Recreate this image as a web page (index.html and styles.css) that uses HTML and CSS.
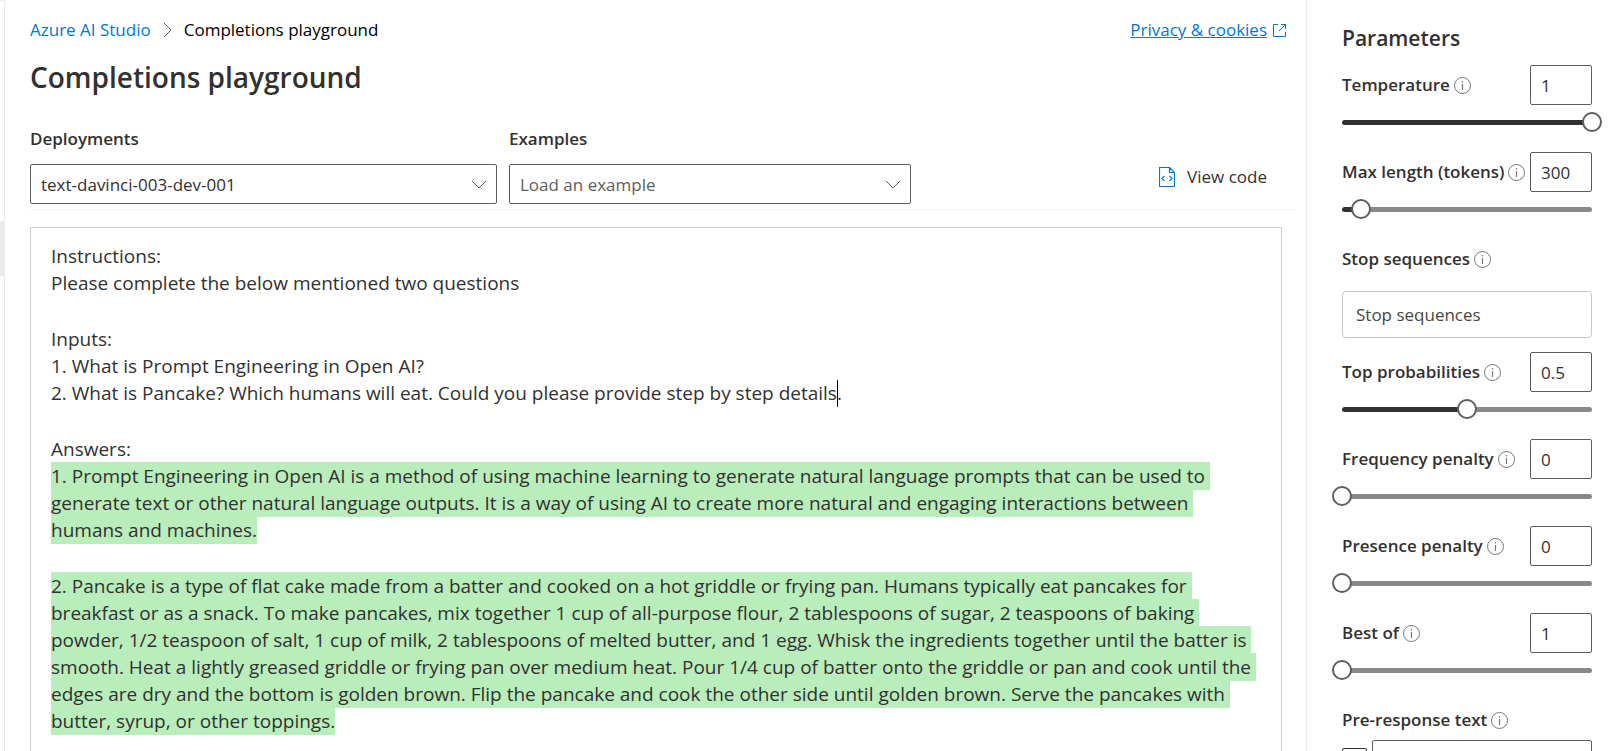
FILE: index.html
```html
<!DOCTYPE html>
<html lang="en">
<head>
<meta charset="utf-8">
<meta name="viewport" content="width=device-width, initial-scale=1">
<title>Completions playground - Azure AI Studio</title>
<link rel="stylesheet" href="styles.css">
</head>
<body>
<svg class="sprite" aria-hidden="true">
  <symbol id="info" viewBox="0 0 17 17">
    <circle cx="8.500" cy="8.500" r="8" fill="none" stroke="currentColor"/>
    <path d="M8.500 7v6M8.500 4v1.500" fill="none" stroke="currentColor" stroke-width="1.200"/>
  </symbol>
  <symbol id="chevron" viewBox="0 0 16 9">
    <path d="M1 1l7 7 7-7" fill="none" stroke="currentColor"/>
  </symbol>
</svg>
<div class="app">
  <nav class="rail" aria-label="Navigation"><span class="rail-current"></span></nav>

  <main class="main">
    <header class="top">
      <nav class="crumbs" aria-label="Breadcrumb">
        <a href="#">Azure AI Studio</a>
        <svg class="crumb-sep" viewBox="0 0 9 16" aria-hidden="true"><path d="M1 1l7 7-7 7" fill="none" stroke="currentColor"/></svg>
        <span>Completions playground</span>
      </nav>
      <a class="privacy" href="#"><span>Privacy &amp; cookies</span>
        <svg viewBox="0 0 13 13" aria-hidden="true"><path d="M5 .5H.5v12h12V8M8 .5h4.500V5M12.500.5L6 7" fill="none" stroke="currentColor"/></svg>
      </a>
    </header>
    <h1>Completions playground</h1>

    <div class="toolbar">
      <div class="field field-deploy">
        <label for="deployments">Deployments</label>
        <div class="select">
          <select id="deployments"><option>text-davinci-003-dev-001</option></select>
          <svg aria-hidden="true"><use href="#chevron"/></svg>
        </div>
      </div>
      <div class="field field-example">
        <label for="examples">Examples</label>
        <div class="select muted">
          <select id="examples"><option>Load an example</option></select>
          <svg aria-hidden="true"><use href="#chevron"/></svg>
        </div>
      </div>
      <button class="view-code" type="button">
        <svg viewBox="0 0 16 20" aria-hidden="true"><path d="M.5.5h10l5 5v14H.5zM10.500.5v5h5M5.500 9L3 11.500 5.500 14M10.500 9l2.500 2.500-2.500 2.500" fill="none" stroke="currentColor" stroke-width="1.200"/></svg>
        View code
      </button>
    </div>

    <div class="editor" contenteditable="true" role="textbox" aria-multiline="true" aria-label="Prompt" spellcheck="false">
      <p>Instructions:
Please complete the below mentioned two questions</p>
      <p>Inputs:
1. What is Prompt Engineering in Open AI?
2. What is Pancake? Which humans will eat. Could you please provide step by step details<span class="caret"></span>.</p>
      <p>Answers:
<mark>1. Prompt Engineering in Open AI is a method of using machine learning to generate natural language prompts that can be used to 
generate text or other natural language outputs. It is a way of using AI to create more natural and engaging interactions between 
humans and machines.</mark></p>
      <p><mark>2. Pancake is a type of flat cake made from a batter and cooked on a hot griddle or frying pan. Humans typically eat pancakes for 
breakfast or as a snack. To make pancakes, mix together 1 cup of all-purpose flour, 2 tablespoons of sugar, 2 teaspoons of baking 
powder, 1/2 teaspoon of salt, 1 cup of milk, 2 tablespoons of melted butter, and 1 egg. Whisk the ingredients together until the batter is 
smooth. Heat a lightly greased griddle or frying pan over medium heat. Pour 1/4 cup of batter onto the griddle or pan and cook until the 
edges are dry and the bottom is golden brown. Flip the pancake and cook the other side until golden brown. Serve the pancakes with 
butter, syrup, or other toppings.</mark></p>
    </div>
  </main>

  <aside class="params">
    <h2>Parameters</h2>
    <div class="param">
      <div class="row"><label for="temp">Temperature</label><svg class="info" aria-hidden="true"><use href="#info"/></svg><input class="num" id="temp" type="text" value="1"></div>
      <div class="slider"><span class="track" style="--fill: 100%"></span><input type="range" aria-label="Temperature" min="0" max="1" step="0.01" value="1"></div>
    </div>
    <div class="param">
      <div class="row"><label for="maxlen">Max length (tokens)</label><svg class="info" aria-hidden="true"><use href="#info"/></svg><input class="num" id="maxlen" type="text" value="300"></div>
      <div class="slider"><span class="track" style="--fill: 7.5%"></span><input type="range" aria-label="Max length" min="0" max="4000" value="300"></div>
    </div>
    <div class="param stop">
      <div class="row"><label for="stop">Stop sequences</label><svg class="info" aria-hidden="true"><use href="#info"/></svg></div>
      <input class="text" id="stop" type="text" placeholder="Stop sequences">
    </div>
    <div class="param">
      <div class="row"><label for="topp">Top probabilities</label><svg class="info" aria-hidden="true"><use href="#info"/></svg><input class="num" id="topp" type="text" value="0.5"></div>
      <div class="slider"><span class="track" style="--fill: 50%"></span><input type="range" aria-label="Top probabilities" min="0" max="1" step="0.01" value="0.5"></div>
    </div>
    <div class="param">
      <div class="row"><label for="freq">Frequency penalty</label><svg class="info" aria-hidden="true"><use href="#info"/></svg><input class="num" id="freq" type="text" value="0"></div>
      <div class="slider"><span class="track" style="--fill: 0%"></span><input type="range" aria-label="Frequency penalty" min="0" max="2" step="0.01" value="0"></div>
    </div>
    <div class="param">
      <div class="row"><label for="pres">Presence penalty</label><svg class="info" aria-hidden="true"><use href="#info"/></svg><input class="num" id="pres" type="text" value="0"></div>
      <div class="slider"><span class="track" style="--fill: 0%"></span><input type="range" aria-label="Presence penalty" min="0" max="2" step="0.01" value="0"></div>
    </div>
    <div class="param">
      <div class="row"><label for="best">Best of</label><svg class="info" aria-hidden="true"><use href="#info"/></svg><input class="num" id="best" type="text" value="1"></div>
      <div class="slider"><span class="track" style="--fill: 0%"></span><input type="range" aria-label="Best of" min="1" max="20" value="1"></div>
    </div>
    <div class="param">
      <div class="row"><label for="pre">Pre-response text</label><svg class="info" aria-hidden="true"><use href="#info"/></svg></div>
      <div class="check-row"><input type="checkbox" aria-label="Use pre-response text"><input class="num wide" id="pre" type="text"></div>
    </div>
  </aside>
</div>
</body>
</html>
```
FILE: styles.css
```css
* { box-sizing: border-box; }

body {
  margin: 0;
  font: 17px/24px "Segoe UI", "Open Sans", "Noto Sans", sans-serif;
  color: #323130;
  background: #fff;
}

h1, h2, p { margin: 0; }
label { font-weight: 600; white-space: nowrap; }
input, select, button { font: inherit; color: inherit; }
.sprite { display: none; }

.app { display: flex; height: 100vh; overflow: hidden; }

.rail {
  flex: none;
  width: 5px;
  padding-top: 220px;
  border-top: 1px solid #edebe9;
  border-right: 1px solid #edebe9;
}
.rail-current { display: block; height: 55px; background: #edebe9; }

.main {
  flex: 1;
  min-width: 0;
  display: flex;
  flex-direction: column;
  padding: 18px 11px 0 25px;
}

.top { display: flex; justify-content: space-between; padding-right: 9px; }
.crumbs { display: flex; align-items: center; gap: 12px; color: #000; }
.crumbs a, .privacy { color: #0078d4; text-decoration: none; }
.crumb-sep { width: 9px; height: 16px; color: #605e5c; }
.privacy { display: flex; align-items: center; gap: 6px; }
.privacy span { text-decoration: underline; }
.privacy svg { width: 13px; height: 13px; }

h1 { font-size: 28px; line-height: 36px; font-weight: 600; margin-top: 17px; }

.toolbar {
  display: flex;
  gap: 12px;
  margin-top: 32px;
  padding-bottom: 5px;
  border-bottom: 1px solid #f3f2f1;
}
.field { display: flex; flex-direction: column; gap: 13px; }
.field-deploy { flex: 0 1 467px; }
.field-example { flex: 0 1 402px; }

.select { display: grid; align-items: center; }
.select > * { grid-area: 1 / 1; }
.select select {
  appearance: none;
  width: 100%;
  height: 40px;
  padding: 1px 36px 0 10px;
  border: 1px solid #605e5c;
  border-radius: 2px;
  background: #fff;
}
.select svg {
  justify-self: end;
  width: 16px;
  height: 9px;
  margin-right: 10px;
  color: #605e5c;
  pointer-events: none;
}
.muted select { color: #605e5c; }

.view-code {
  display: flex;
  align-items: center;
  align-self: end;
  gap: 12px;
  height: 40px;
  margin: 0 28px 7px auto;
  padding: 0;
  border: 0;
  background: none;
}
.view-code svg { width: 16px; height: 20px; color: #0078d4; }

.editor {
  flex: 1 0 auto;
  display: flex;
  flex-direction: column;
  gap: 29px;
  margin: 17px 13px 0 0;
  padding: 15px 10px 40px 20px;
  border: 1px solid #d2d0ce;
  font-size: 19px;
  line-height: 27px;
  outline: 0;
}
.editor p { white-space: pre-wrap; }
mark {
  padding: 1px 0;
  color: inherit;
  background: #b9edbb;
}
.caret {
  display: inline-block;
  height: 27px;
  margin-right: -1px;
  border-left: 1px solid #000;
  vertical-align: bottom;
}

.params {
  flex: none;
  width: 307px;
  padding: 23px 21px 0 35px;
  border-left: 1px solid #edebe9;
}
h2 { font-size: 21px; line-height: 30px; font-weight: 600; margin-bottom: 12px; }
.param { margin-bottom: 20px; }
.stop { margin-bottom: 14px; }
.row { display: flex; align-items: center; gap: 4px; height: 40px; }
.info { flex: none; width: 17px; height: 17px; color: #797775; }
.num {
  flex: none;
  width: 62px;
  height: 40px;
  margin-left: auto;
  padding: 0 10px;
  border: 1px solid #605e5c;
  border-radius: 2px;
}
.text {
  width: 100%;
  height: 47px;
  margin-top: 12px;
  padding: 0 13px;
  border: 1px solid #c8c6c4;
  border-radius: 4px;
}
.text::placeholder { color: #484644; }

.slider { display: grid; align-items: center; margin-top: 7px; }
.slider > * { grid-area: 1 / 1; }
.track {
  height: 5px;
  border-radius: 3px;
  background: linear-gradient(to right, #323130 var(--fill), #8a8886 var(--fill));
}
.slider input {
  appearance: none;
  width: calc(100% + 20px);
  height: 20px;
  margin: 0 -10px;
  background: none;
}
.slider input::-webkit-slider-thumb {
  appearance: none;
  width: 20px;
  height: 20px;
  border: 2px solid #605e5c;
  border-radius: 50%;
  background: #fff;
}

.check-row { display: flex; gap: 5px; align-items: flex-start; }
.check-row input[type="checkbox"] {
  appearance: none;
  flex: none;
  width: 25px;
  height: 25px;
  margin: 8px 0 0;
  border: 1px solid #323130;
  border-radius: 2px;
}
.wide { flex: 1; min-width: 0; }
```
